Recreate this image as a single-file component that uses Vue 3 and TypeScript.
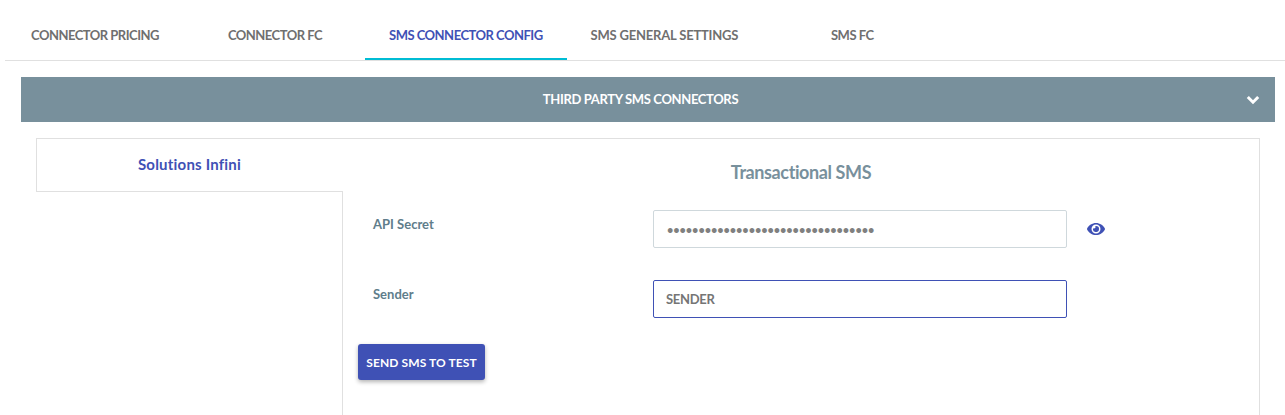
<script setup lang="ts">
import { ref } from 'vue'

const tabs = [
  'Connector Pricing',
  'Connector FC',
  'SMS Connector Config',
  'SMS General Settings',
  'SMS FC',
]
const activeTab = ref(2)
const secret = ref('x'.repeat(33))
const sender = ref('SENDER')
</script>

<template>
  <div class="page">
    <nav class="tabs">
      <button
        v-for="(tab, i) in tabs"
        :key="tab"
        type="button"
        :class="['tab', { active: i === activeTab }]"
        @click="activeTab = i"
      >{{ tab }}</button>
    </nav>

    <div class="panel-bar">
      <span class="panel-title">Third Party SMS Connectors</span>
      <svg class="chevron" viewBox="0 0 14 10" width="14" height="10">
        <path d="M1.8 2 7 7.2 12.2 2" fill="none" stroke="#fff" stroke-width="3" />
      </svg>
    </div>

    <section class="card">
      <aside class="side">
        <div class="side-tab">Solutions Infini</div>
      </aside>
      <div class="content">
        <h2>Transactional SMS</h2>
        <div class="field">
          <label for="api-secret">API Secret</label>
          <input id="api-secret" v-model="secret" type="password" class="input secret" />
          <svg class="eye" viewBox="0 0 576 512" width="18" height="16">
            <path fill="#3f51b5" d="M572.52 241.4C518.29 135.59 410.93 64 288 64S57.68 135.64 3.48 241.41a32.35 32.35 0 0 0 0 29.19C57.71 376.41 165.07 448 288 448s230.32-71.64 284.52-177.41a32.35 32.35 0 0 0 0-29.19zM288 400a144 144 0 1 1 144-144 143.93 143.93 0 0 1-144 144zm0-240a95.31 95.31 0 0 0-25.31 3.79 47.85 47.85 0 0 1-66.9 66.9A95.78 95.78 0 1 0 288 160z" />
          </svg>
        </div>
        <div class="field">
          <label for="sender">Sender</label>
          <input id="sender" v-model="sender" type="text" class="input focused" />
        </div>
        <button type="button" class="send-btn">Send SMS to test</button>
      </div>
    </section>
  </div>
</template>

<style>
html,
body {
  margin: 0;
  height: 415px;
  overflow: hidden;
  background: #fff;
}
</style>

<style scoped>
.page {
  font-family: Lato, "Open Sans", sans-serif;
  padding-left: 5px;
}

.tabs {
  display: flex;
  height: 60px;
  border-bottom: 1px solid #e0e0e0;
}

.tab {
  min-width: 180px;
  padding: 12px 24px 0;
  background: none;
  border: none;
  border-bottom: 2px solid transparent;
  color: #6f6f6f;
  font: 700 13px Lato, sans-serif;
  letter-spacing: -0.5px;
  text-transform: uppercase;
  cursor: pointer;
}

.tab:nth-child(4) {
  letter-spacing: -0.2px;
}

.tab.active {
  color: #3f51b5;
  border-bottom-color: #00bcd4;
}

.panel-bar {
  display: flex;
  align-items: center;
  justify-content: center;
  position: relative;
  height: 45px;
  margin: 16px 10px 0 16px;
  padding: 0 15px 2px 0;
  box-sizing: border-box;
  background: #78909c;
  color: #fff;
  font-size: 13px;
  font-weight: 700;
  letter-spacing: -0.35px;
  text-transform: uppercase;
}

.chevron {
  position: absolute;
  right: 15px;
  top: 18px;
}

.card {
  display: flex;
  min-height: 277px;
  margin: 16px 25px 0 31px;
  border-top: 1px solid #e0e0e0;
  border-right: 1px solid #e0e0e0;
}

.side {
  width: 306px;
  flex: none;
}

.side-tab {
  height: 53px;
  box-sizing: border-box;
  padding-top: 16px;
  text-align: center;
  color: #3f51b5;
  font-size: 15px;
  font-weight: 700;
  letter-spacing: 0.2px;
  border-left: 1px solid #e0e0e0;
  border-bottom: 1px solid #e0e0e0;
}

.content {
  flex: 1;
  margin-top: 52px;
  border-left: 1px solid #e0e0e0;
  padding-left: 15px;
}

h2 {
  margin: -33px 0 0 -15px;
  height: 52px;
  text-align: center;
  color: #78909c;
  font-size: 18px;
  font-weight: 700;
  letter-spacing: -0.4px;
  line-height: 28px;
}

.field {
  display: flex;
  align-items: flex-start;
  height: 70px;
  padding-left: 15px;
}

.field label {
  width: 280px;
  padding-top: 6px;
  color: #607d8b;
  font-size: 13px;
  font-weight: 700;
}

.input {
  width: 414px;
  height: 38px;
  box-sizing: border-box;
  padding: 0 12px;
  border: 1px solid #cfd8dc;
  border-radius: 2px;
  color: #757575;
  font: 700 13px Lato, sans-serif;
  letter-spacing: -0.3px;
  outline: none;
}

.input.secret {
  padding-left: 13px;
  font-size: 11px;
  letter-spacing: -0.1px;
  color: #808080;
}

.input.focused {
  border-color: #3f51b5;
}

.eye {
  margin: 11px 0 0 20px;
}

.send-btn {
  display: block;
  width: 127px;
  height: 36px;
  margin-top: -6px;
  padding: 0;
  background: #3f51b5;
  border: none;
  border-radius: 3px;
  box-shadow: 0 2px 4px rgba(0, 0, 0, 0.3);
  color: #fff;
  font: 700 12px Lato, sans-serif;
  letter-spacing: 0.1px;
  text-transform: uppercase;
  cursor: pointer;
}
</style>
